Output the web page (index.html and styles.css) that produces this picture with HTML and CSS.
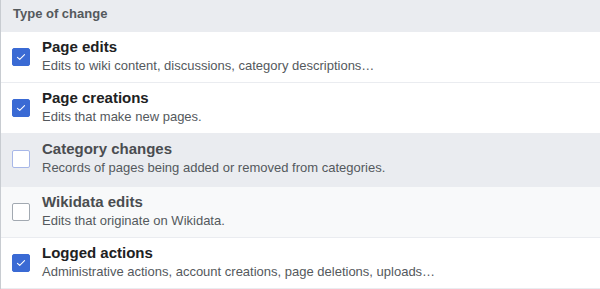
FILE: index.html
```html
<!DOCTYPE html>
<html lang="en">
<head>
    <meta charset="UTF-8">
    <title>Type of change</title>
    <link rel="stylesheet" href="styles.css">
</head>
<body>
    <div class="panel">
        <div class="panel-head">Type of change</div>

        <label class="option">
            <span class="box checked">
                <svg viewBox="0 0 18 18"><path d="M5 9.3l2.6 2.5L13 6.4" /></svg>
            </span>
            <span class="option-text">
                <span class="option-title">Page edits</span>
                <span class="option-desc">Edits to wiki content, discussions, category descriptions…</span>
            </span>
        </label>

        <label class="option">
            <span class="box checked">
                <svg viewBox="0 0 18 18"><path d="M5 9.3l2.6 2.5L13 6.4" /></svg>
            </span>
            <span class="option-text">
                <span class="option-title">Page creations</span>
                <span class="option-desc">Edits that make new pages.</span>
            </span>
        </label>

        <label class="option hover">
            <span class="box"></span>
            <span class="option-text">
                <span class="option-title muted">Category changes</span>
                <span class="option-desc">Records of pages being added or removed from categories.</span>
            </span>
        </label>

        <label class="option soft">
            <span class="box"></span>
            <span class="option-text">
                <span class="option-title muted">Wikidata edits</span>
                <span class="option-desc">Edits that originate on Wikidata.</span>
            </span>
        </label>

        <label class="option">
            <span class="box checked">
                <svg viewBox="0 0 18 18"><path d="M5 9.3l2.6 2.5L13 6.4" /></svg>
            </span>
            <span class="option-text">
                <span class="option-title">Logged actions</span>
                <span class="option-desc">Administrative actions, account creations, page deletions, uploads…</span>
            </span>
        </label>
    </div>
</body>
</html>
```

FILE: styles.css
```css
:root {
    --blue: #3a6ad4;
    --head-bg: #eaecf0;
    --line: #eaecf0;
    --text: #202122;
    --muted: #54595d;
}

body {
    margin: 0;
    font-family: 'Liberation Sans', Arial, sans-serif;
    background: #fff;
    color: var(--text);
}

.panel {
    border-left: 1px solid #c8ccd1;
    height: 289px;
    overflow: hidden;
}

.panel-head {
    height: 32px;
    box-sizing: border-box;
    padding: 6px 12px 0;
    background: var(--head-bg);
    color: var(--muted);
    font-size: 13px;
    line-height: 16px;
    font-weight: bold;
}

.option {
    display: flex;
    align-items: center;
    gap: 12px;
    padding: 5px 12px 8px 11px;
    border-bottom: 1px solid var(--line);
    background: #fff;
}

.option.hover {
    background: #eaecf0;
    padding-bottom: 10px;
}

.option.soft {
    background: #f8f9fa;
}

.box {
    flex: none;
    width: 18px;
    height: 18px;
    box-sizing: border-box;
    border: 1px solid #a2a9b1;
    border-radius: 2px;
    background: #fff;
    margin-top: 2px;
    display: flex;
}

.option.hover .box {
    border-color: #a7b7e8;
}

.box.checked {
    background: var(--blue);
    border-color: var(--blue);
}

.box svg {
    width: 100%;
    height: 100%;
    fill: none;
    stroke: #fff;
    stroke-width: 1.2;
    stroke-linecap: round;
    stroke-linejoin: round;
}

.option-text {
    display: flex;
    flex-direction: column;
}

.option-title {
    font-size: 15px;
    font-weight: bold;
    line-height: 20px;
}

.option-title.muted {
    color: #4a4d50;
}

.option-desc {
    font-size: 13px;
    line-height: 17px;
    color: var(--muted);
}
```
